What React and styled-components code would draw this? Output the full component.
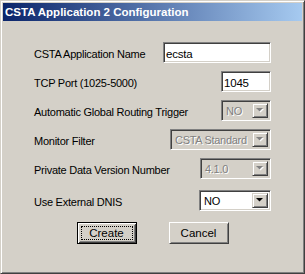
import React from "react";
import styled, { createGlobalStyle, css } from "styled-components";

const GlobalStyle = createGlobalStyle`
  html, body { margin: 0; padding: 0; background: #d4d0c8; }
  * { box-sizing: border-box; }
`;

const Window = styled.div`
  width: 305px;
  height: 274px;
  background: #d4d0c8;
  border: 1px solid;
  border-color: #d4d0c8 #404040 #404040 #d4d0c8;
  box-shadow: inset 1px 1px #ffffff, inset -1px -1px #808080;
  padding: 2px;
  display: flex;
  flex-direction: column;
  font-family: "Liberation Sans", Arial, sans-serif;
  font-size: 11px;
  color: #000;
`;

const TitleBar = styled.div`
  height: 18px;
  background: linear-gradient(to right, #0a246a, #a6caf0);
  color: #fff;
  font-weight: bold;
  font-size: 11.5px;
  display: flex;
  align-items: center;
  padding-left: 2px;
  white-space: nowrap;
`;

const Body = styled.div`
  padding: 21px 31px 0 31px;
  display: flex;
  flex-direction: column;
`;

const Form = styled.div`
  display: flex;
  flex-direction: column;
  gap: 8px;
`;

const Row = styled.div`
  display: flex;
  align-items: center;
  justify-content: space-between;
  height: 21px;
  margin-top: ${(p) => p.$extra || 0}px;
`;

const Label = styled.span`
  padding-top: 2px;
  white-space: nowrap;
  letter-spacing: -0.25px;
`;

const sunken = css`
  border: 1px solid;
  border-color: #808080 #ffffff #ffffff #808080;
  box-shadow: inset 1px 1px #404040, inset -1px -1px #d4d0c8;
`;

const Edit = styled.div`
  ${sunken};
  width: ${(p) => p.$w}px;
  height: 21px;
  background: #fff;
  padding: 2px 2px 0 2px;
  display: flex;
  align-items: center;
  font-size: 11.5px;
  letter-spacing: -0.2px;
`;

const Combo = styled.div`
  ${sunken};
  width: ${(p) => p.$w}px;
  height: 21px;
  background: ${(p) => (p.$disabled ? "#d4d0c8" : "#fff")};
  padding: 2px;
  display: flex;
  align-items: stretch;
`;

const ComboText = styled.div`
  flex: 1;
  min-width: 0;
  display: flex;
  align-items: center;
  padding: 1px 0 0 2px;
  font-size: 11px;
  letter-spacing: -0.3px;
  white-space: nowrap;
  overflow: hidden;
  color: ${(p) => (p.$disabled ? "#808080" : "#000")};
  text-shadow: ${(p) => (p.$disabled ? "1px 1px #ffffff" : "none")};
`;

const DropButton = styled.div`
  width: 16px;
  flex: none;
  background: #d4d0c8;
  border: 1px solid;
  border-color: #d4d0c8 #404040 #404040 #d4d0c8;
  box-shadow: inset 1px 1px #ffffff, inset -1px -1px #808080;
  display: flex;
  align-items: center;
  justify-content: center;
`;

const Arrow = ({ disabled }) => (
  <svg width="8" height="5" viewBox="0 0 8 5">
    {disabled && <polygon points="1,1 8,1 4.5,4.5" fill="#ffffff" />}
    <polygon points="0,0 7,0 3.5,3.5" fill={disabled ? "#808080" : "#000"} />
  </svg>
);

const ButtonRow = styled.div`
  display: flex;
  justify-content: center;
  gap: 32px;
  margin-top: 11px;
`;

const Button = styled.div`
  width: 60px;
  height: 22px;
  display: flex;
  align-items: center;
  justify-content: center;
  font-size: 11.5px;
  background: #d4d0c8;
  position: relative;
  ${(p) =>
    p.$default
      ? css`
          border: 1px solid #000;
          box-shadow: inset 1px 1px #ffffff, inset -1px -1px #404040,
            inset 2px 2px #d4d0c8, inset -2px -2px #808080;
        `
      : css`
          border: 1px solid;
          border-color: #ffffff #404040 #404040 #ffffff;
          box-shadow: inset 1px 1px #d4d0c8, inset -1px -1px #808080;
        `}
`;

const FocusRect = styled.span`
  position: absolute;
  left: 3px;
  top: 3px;
  right: 3px;
  bottom: 3px;
  border: 1px dotted #000;
`;

const ComboBox = ({ w, value, disabled }) => (
  <Combo $w={w} $disabled={disabled}>
    <ComboText $disabled={disabled}>{value}</ComboText>
    <DropButton>
      <Arrow disabled={disabled} />
    </DropButton>
  </Combo>
);

export default function App() {
  return (
    <>
      <GlobalStyle />
      <Window>
        <TitleBar>CSTA Application 2 Configuration</TitleBar>
        <Body>
          <Form>
            <Row>
              <Label>CSTA Application Name</Label>
              <Edit $w={108}>ecsta</Edit>
            </Row>
            <Row>
              <Label>TCP Port (1025-5000)</Label>
              <Edit $w={50}>1045</Edit>
            </Row>
            <Row>
              <Label>Automatic Global Routing Trigger</Label>
              <ComboBox w={50} value="NO" disabled />
            </Row>
            <Row>
              <Label>Monitor Filter</Label>
              <ComboBox w={101} value="CSTA Standard" disabled />
            </Row>
            <Row>
              <Label>Private Data Version Number</Label>
              <ComboBox w={71} value="4.1.0" disabled />
            </Row>
            <Row $extra={3}>
              <Label>Use External DNIS</Label>
              <ComboBox w={72} value="NO" />
            </Row>
          </Form>
          <ButtonRow>
            <Button $default>
              <FocusRect />
              Create
            </Button>
            <Button>Cancel</Button>
          </ButtonRow>
        </Body>
      </Window>
    </>
  );
}
